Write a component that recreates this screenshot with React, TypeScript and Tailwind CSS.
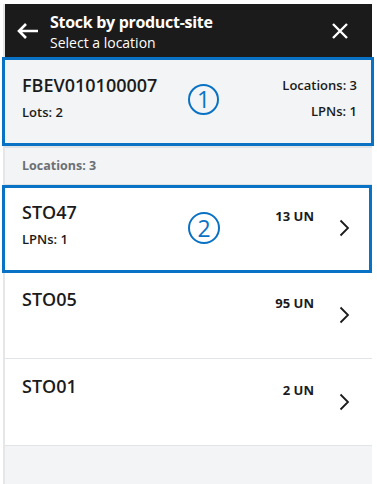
import React from 'react'

const rows = [
  { code: 'STO47', qty: '13 UN', lpns: 'LPNs: 1' },
  { code: 'STO05', qty: '95 UN', lpns: '' },
  { code: 'STO01', qty: '2 UN', lpns: '' },
]

function Chevron() {
  return (
    <svg width="11" height="18" viewBox="0 0 11 18" fill="none">
      <path d="M1.5 1.5 L9 9 L1.5 16.5" stroke="#1b1b1b" strokeWidth="1.8" />
    </svg>
  )
}

function Marker({ n, className }: { n: string; className: string }) {
  return (
    <div
      className={`absolute flex items-center justify-center rounded-full border-2 border-[#0a72c4] text-[#0a72c4] text-[23px] font-normal leading-none ${className}`}
    >
      {n}
    </div>
  )
}

export default function App() {
  return (
    <div className="relative w-[377px] h-[484px] bg-white pl-[3px] pt-[4px] font-['Open_Sans',sans-serif] text-[#1b1b1b]">
      <div className="w-[369px] h-[480px] border-l-2 border-[#e4e6e8] bg-[#f2f4f5] flex flex-col">
        {/* Header */}
        <div className="h-[53px] bg-[#1b1b1b] flex items-center shrink-0">
          <div className="w-[45px] flex justify-center pl-[1px]">
            <svg width="22" height="18" viewBox="0 0 22 18" fill="none">
              <path d="M9 2 L2 9 L9 16 M2 9 H21" stroke="white" strokeWidth="2.6" />
            </svg>
          </div>
          <div className="flex-1 self-stretch flex flex-col pt-[7px] text-white">
            <span className="text-[16px] font-bold leading-[22px] tracking-[-0.3px]">Stock by product-site</span>
            <span className="text-[14px] leading-[19px]">Select a location</span>
          </div>
          <div className="w-[44px] flex justify-start pl-[3px]">
            <svg width="18" height="18" viewBox="0 0 18 18" fill="none">
              <path d="M2 2 L16 16 M16 2 L2 16" stroke="white" strokeWidth="2.4" />
            </svg>
          </div>
        </div>

        {/* Product card */}
        <div className="h-[91px] shrink-0 flex justify-between bg-[#f2f4f5] border-b-2 border-[#e0e3e5] px-[17px] pr-[15px]">
          <div className="flex flex-col pt-[17px] gap-[7px]">
            <span className="text-[18px] font-semibold leading-[22px]">FBEV010100007</span>
            <span className="text-[13px] font-semibold leading-[18px]">Lots: 2</span>
          </div>
          <div className="flex flex-col items-end pt-[19px] gap-[8px]">
            <span className="text-[13px] font-semibold leading-[18px]">Locations: 3</span>
            <span className="text-[13px] font-semibold leading-[18px]">LPNs: 1</span>
          </div>
        </div>

        {/* Section header */}
        <div className="h-[37px] shrink-0 flex items-center pl-[17px] border-b border-[#dfe2e4]">
          <span className="text-[12.5px] font-bold text-[#6c6f74]">Locations: 3</span>
        </div>

        {/* Rows */}
        {rows.map((r) => (
          <div key={r.code} className="h-[87px] shrink-0 bg-white border-b border-[#e2e5e7] flex">
            <div className="flex-1 flex flex-col pl-[17px] pt-[16px] gap-[8px]">
              <span className="text-[18px] font-semibold leading-[22px]">{r.code}</span>
              {r.lpns && <span className="text-[13px] font-semibold leading-[16px]">{r.lpns}</span>}
            </div>
            <div className="pt-[18px]">
              <span className="text-[13px] font-bold leading-[18px]">{r.qty}</span>
            </div>
            <div className="w-[58px] flex items-center justify-center pl-[2px]">
              <Chevron />
            </div>
          </div>
        ))}
      </div>

      {/* Annotation overlays */}
      <div className="absolute left-[2px] top-[57px] w-[372px] h-[89px] border-[3px] border-[#0a72c4]" />
      <div className="absolute left-[2px] top-[185px] w-[370px] h-[88px] border-[3px] border-[#0a72c4]" />
      <Marker n="1" className="left-[188px] top-[84px] w-[31px] h-[31px]" />
      <Marker n="2" className="left-[188px] top-[212px] w-[32px] h-[32px]" />
    </div>
  )
}
